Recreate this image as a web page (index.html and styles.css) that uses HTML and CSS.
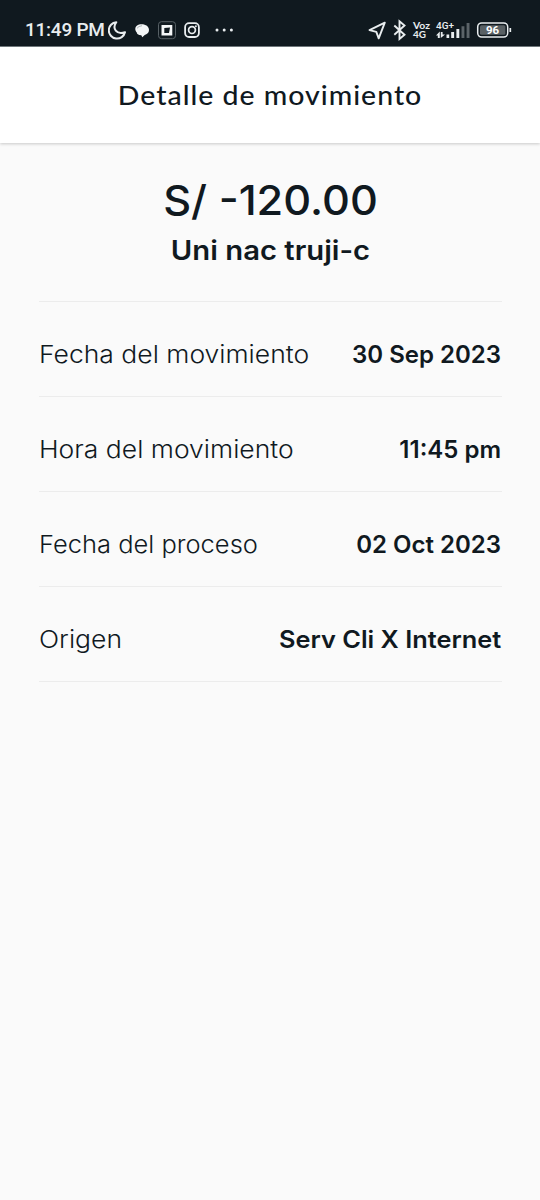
FILE: index.html
```html
<!DOCTYPE html>
<html lang="es">
<head>
<meta charset="utf-8">
<title>Detalle de movimiento</title>
<link rel="stylesheet" href="styles.css">
</head>
<body>
<div class="status">
  <span class="clock">11:49 PM</span>
  <svg class="icons-left" width="132" height="24" viewBox="108 18 132 24" fill="none" stroke="#e9edef">
    <path d="M116.3 22.2A8.2 8.2 0 1 0 125 32.2C116.500 35.200 111.800 28.500 116.300 22.200Z" stroke-width="2" stroke-linejoin="round"/>
    <path d="M135.300 29C135.300 26 138 24.300 141.500 24.300C146 24.300 149 26.700 149 30C149 33 147 34.300 144.700 35L142.300 37.300L141.300 35.300C138 35 136.800 33.500 136.800 32.400C135.800 31.500 135.300 30.300 135.300 29Z" fill="#f4f6f7" stroke="none"/>
    <path d="M137 28.300Q138.500 26 142 25.700" stroke="#7b8388" stroke-width=".6"/>
    <rect x="158.500" y="21.700" width="17" height="17" rx="3" stroke="#586166" stroke-width="1"/>
    <path d="M161.500 25H172.300V35.500H161.500ZM164.300 28V33H169L170 27.400Z" fill="#f4f6f7" fill-rule="evenodd" stroke="none"/>
    <rect x="185.100" y="23.200" width="13.800" height="13.800" rx="4" stroke-width="1.800"/>
    <circle cx="192" cy="30.100" r="3.400" stroke-width="1.700"/>
    <circle cx="195.900" cy="26.300" r="1" fill="#e9edef" stroke="none"/>
    <g fill="#e9edef" stroke="none"><circle cx="217" cy="30" r="1.500"/><circle cx="224.200" cy="30" r="1.500"/><circle cx="231.400" cy="30" r="1.500"/></g>
  </svg>
  <svg class="icons-right" width="146" height="26" viewBox="366 17 146 26" fill="none" stroke="#e9edef">
    <path d="M384.800 22.700L369.500 30.200L376.300 31.900L378.700 38.300Z" stroke-width="1.900" stroke-linejoin="round"/>
    <path d="M394.300 25.500L404.500 34.800L399.500 39V21.300L404.500 25.500L394.300 34.800" stroke-width="1.900"/>
    <g class="net" fill="#e9edef" stroke="none">
      <text class="net-bold" x="413" y="29" textLength="17" lengthAdjust="spacingAndGlyphs">Voz</text>
      <text class="net-bold" x="413" y="38" textLength="13" lengthAdjust="spacingAndGlyphs">4G</text>
      <text x="436" y="28.500" textLength="18" lengthAdjust="spacingAndGlyphs">4G+</text>
      <path d="M436 35.500L439.800 31.500V38H437.800V35.500ZM440.800 32H442.600V34.500H445L440.800 38Z"/>
      <path d="M446.500 34.500h2.700v3.500h-2.700zM451.200 32h2.900v6h-2.900zM456.400 29h2.900v9h-2.900z"/>
      <path d="M461.500 26.200h2.900v11.800h-2.900zM466.600 23h2.900v15h-2.900z" fill="#5b6368"/>
    </g>
    <rect x="477.700" y="22.900" width="30" height="14.200" rx="4" stroke-width="1.500"/>
    <rect x="480" y="25.200" width="25.400" height="9.600" rx="1.500" fill="#596064" stroke="none"/>
    <path d="M510.300 28V32" stroke-width="1.700"/>
    <text class="battery" x="486" y="34.300" textLength="13" fill="#fff" stroke="none">96</text>
  </svg>
</div>
<header class="header"><h1>Detalle de movimiento</h1></header>
<main class="detail">
  <div class="amount">S/ -120.00</div>
  <div class="merchant">Uni nac truji-c</div>
  <dl class="rows">
    <div class="row"><dt>Fecha del movimiento</dt><dd>30 Sep 2023</dd></div>
    <div class="row"><dt>Hora del movimiento</dt><dd>11:45 pm</dd></div>
    <div class="row"><dt class="narrow">Fecha del proceso</dt><dd>02 Oct 2023</dd></div>
    <div class="row"><dt>Origen</dt><dd class="wide">Serv Cli X Internet</dd></div>
  </dl>
</main>
</body>
</html>
```
FILE: styles.css
```css
* { box-sizing: border-box; }
body { margin: 0; min-height: 1200px; background: #fafafa; color: #10191f; font-family: Inter, "Liberation Sans", sans-serif; }
.status { height: 47px; padding: 14px 28px 0 25px; display: flex; align-items: center; background: #10191f; border-bottom: 1px solid #727a7e; color: #e9edef; }
.clock { width: 83px; font: 500 19px/24px Roboto, sans-serif; letter-spacing: -.25px; white-space: nowrap; }
.icons-left { flex: none; }
.icons-right { flex: none; margin-left: auto; }
.net { font: 500 9px Roboto, sans-serif; }
.net-bold { font: 700 9.500px Lato, sans-serif; }
.battery { font: 700 11.500px Roboto, sans-serif; }
.header { height: 96px; display: flex; justify-content: center; align-items: center; background: #fff; box-shadow: 0 1px 3px #0003; }
h1 { margin: 0; font: 500 26px/32px Lato, sans-serif; letter-spacing: .9px; white-space: nowrap; transform: scaleX(1.095); }
.detail { padding: 30px 38px 0 39px; }
.amount { font: 500 41px/54px Inter, sans-serif; text-align: center; white-space: nowrap; transform: scaleX(1.055); }
.merchant { height: 74px; padding-top: 7px; font: 600 27px/34px Inter, sans-serif; text-align: center; white-space: nowrap; transform: scaleX(1.083); }
.rows { margin: 0; border-top: 1px solid #ececec; }
.row { height: 95px; padding: 11px 1px 0 0; display: flex; align-items: center; justify-content: space-between; border-bottom: 1px solid #ececec; white-space: nowrap; }
dt { font-size: 24px; font-weight: 300; transform: scaleX(1.104); transform-origin: left; }
dd { margin: 0; font-size: 24px; font-weight: 600; }
.narrow { transform: scaleX(1.062); }
.wide { transform: scaleX(1.057); transform-origin: right; }
```
